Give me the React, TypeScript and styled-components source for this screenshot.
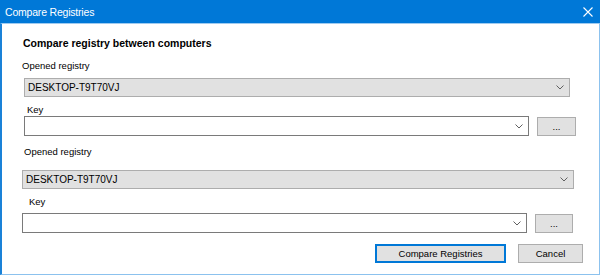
import styled, { createGlobalStyle } from "styled-components";

const GlobalStyle = createGlobalStyle`
  html, body {
    margin: 0;
    padding: 0;
    background: #ffffff;
  }
  body {
    font-family: "Liberation Sans", Arial, sans-serif;
    color: #000;
  }
`;

const Window = styled.div`
  width: 600px;
  height: 275px;
  display: flex;
  flex-direction: column;
  box-sizing: border-box;
`;

const TitleBar = styled.div`
  height: 23px;
  flex: none;
  background: #0078d7;
  display: flex;
  align-items: center;
  justify-content: space-between;
  padding: 0 7px 0 5px;
  box-sizing: border-box;
  color: #ffffff;
  font-size: 10.5px;
  letter-spacing: -0.2px;
`;

const Body = styled.div`
  flex: 1;
  background: #ffffff;
  border-left: 2px solid #1a82d8;
  border-right: 1px solid #8cc2ee;
  border-bottom: 1px solid #8cc2ee;
  border-top: 1px solid #9fcbf0;
  padding: 12px 16px 0 20px;
  box-sizing: border-box;
  display: flex;
  flex-direction: column;
  font-size: 9.5px;
`;

const Heading = styled.div`
  font-weight: bold;
  font-size: 10.5px;
  line-height: 14px;
  margin-left: 1px;
`;

const Label = styled.div<{ $indent: number; $top: number }>`
  line-height: 13px;
  margin-left: ${(p) => p.$indent}px;
  margin-top: ${(p) => p.$top}px;
`;

const Combo = styled.div<{ $width: number; $indent?: number; $top?: number; $readonly?: boolean }>`
  width: ${(p) => p.$width}px;
  height: ${(p) => (p.$readonly ? 19 : 20)}px;
  margin-left: ${(p) => p.$indent || 0}px;
  margin-top: ${(p) => p.$top || 0}px;
  box-sizing: border-box;
  border: 1px solid ${(p) => (p.$readonly ? "#adadad" : "#7a7a7a")};
  background: ${(p) => (p.$readonly ? "#e1e1e1" : "#ffffff")};
  display: flex;
  align-items: center;
  justify-content: space-between;
  padding: 0 5px 0 3px;
  font-size: 10px;
  flex: none;
`;

const Row = styled.div<{ $indent: number; $top: number }>`
  display: flex;
  align-items: center;
  gap: 8px;
  margin-left: ${(p) => p.$indent}px;
  margin-top: ${(p) => p.$top}px;
`;

const Button = styled.div<{ $width: number; $default?: boolean }>`
  width: ${(p) => p.$width}px;
  height: 19px;
  box-sizing: border-box;
  border: 1px solid ${(p) => (p.$default ? "#0078d7" : "#adadad")};
  box-shadow: ${(p) => (p.$default ? "inset 0 0 0 1px #0078d7" : "none")};
  background: #e1e1e1;
  display: flex;
  align-items: center;
  justify-content: center;
  font-size: 9.5px;
  flex: none;
`;

const Footer = styled.div`
  display: flex;
  justify-content: flex-end;
  gap: 12px;
  margin-top: 11px;
`;

const Chevron = () => (
  <svg width="8" height="5" viewBox="0 0 8 5">
    <path d="M0.5 0.5 L4 4 L7.5 0.5" fill="none" stroke="#606060" strokeWidth="1" />
  </svg>
);

const CloseIcon = () => (
  <svg width="10" height="10" viewBox="0 0 10 10">
    <path d="M0.5 0.5 L9.5 9.5 M9.5 0.5 L0.5 9.5" stroke="#ffffff" strokeWidth="1.1" />
  </svg>
);

const App = () => (
  <>
    <GlobalStyle />
    <Window>
      <TitleBar>
        <span>Compare Registries</span>
        <CloseIcon />
      </TitleBar>
      <Body>
        <Heading>Compare registry between computers</Heading>

        <Label $indent={0} $top={9}>Opened registry</Label>
        <Combo $width={546} $indent={2} $top={6} $readonly>
          <span>DESKTOP-T9T70VJ</span>
          <Chevron />
        </Combo>
        <Label $indent={5} $top={6}>Key</Label>
        <Row $indent={2} $top={0}>
          <Combo $width={505}>
            <span />
            <Chevron />
          </Combo>
          <Button $width={39}>...</Button>
        </Row>

        <Label $indent={2} $top={9}>Opened registry</Label>
        <Combo $width={552} $indent={0} $top={12} $readonly>
          <span>DESKTOP-T9T70VJ</span>
          <Chevron />
        </Combo>
        <Label $indent={7} $top={6}>Key</Label>
        <Row $indent={0} $top={5}>
          <Combo $width={505}>
            <span />
            <Chevron />
          </Combo>
          <Button $width={38}>...</Button>
        </Row>

        <Footer>
          <Button $width={131} $default>Compare Registries</Button>
          <Button $width={65}>Cancel</Button>
        </Footer>
      </Body>
    </Window>
  </>
);

export default App;
